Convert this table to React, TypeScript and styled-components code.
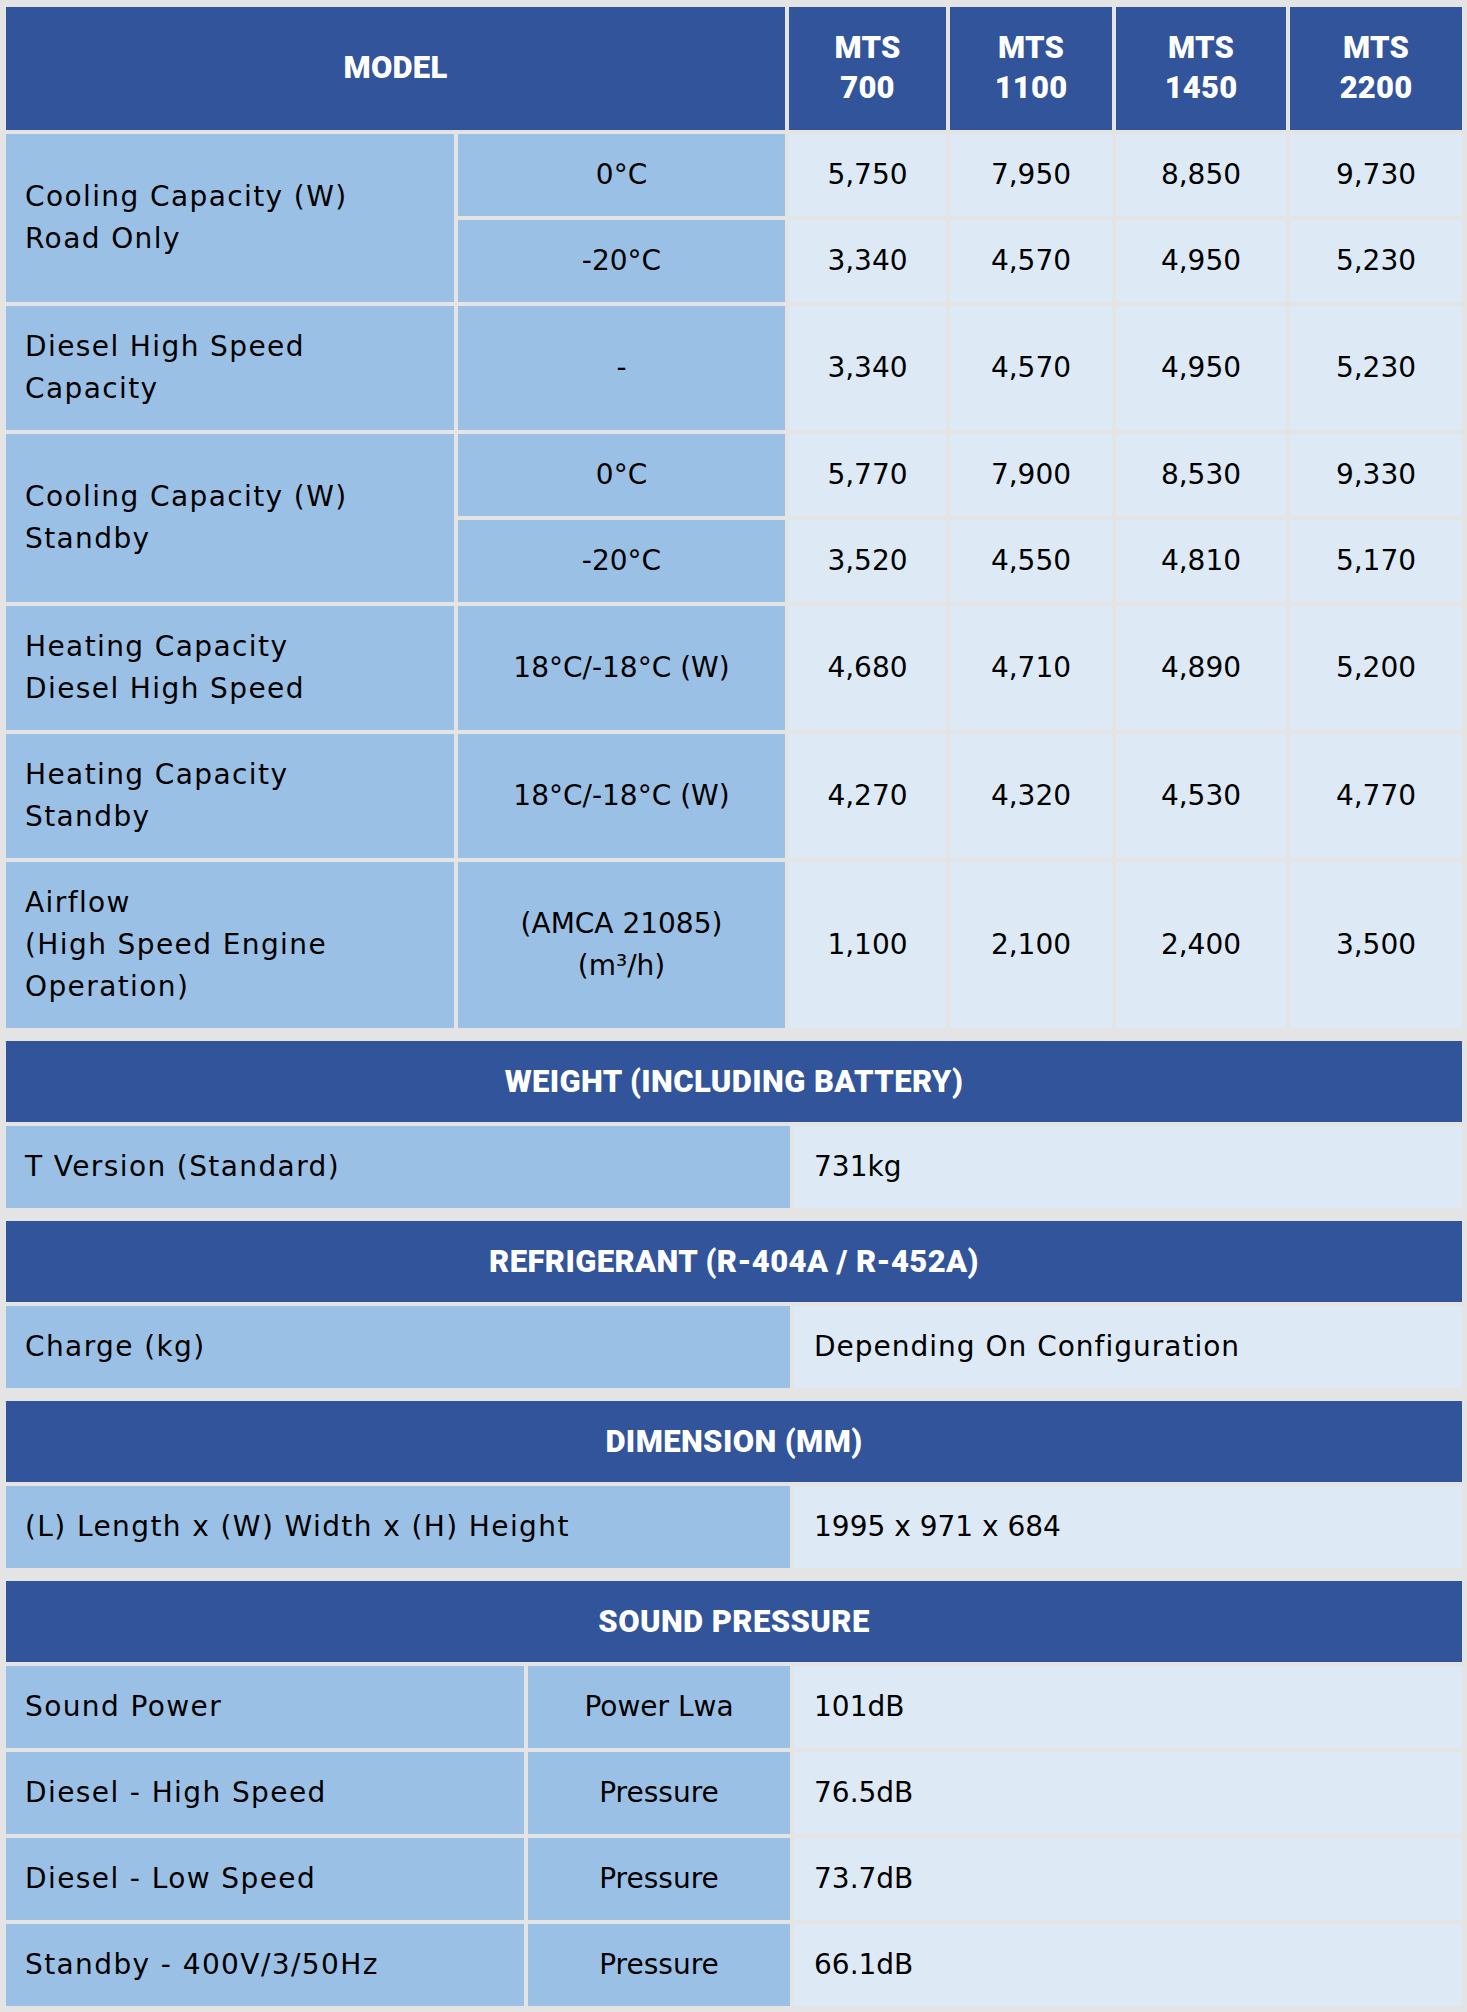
import React from "react";
import styled, { createGlobalStyle } from "styled-components";

const GlobalStyle = createGlobalStyle`
  html, body { margin: 0; padding: 0; background: #e4e4e4; }
  * { box-sizing: border-box; }
`;

const DARK = "#31549a";
const LABEL = "#9bc0e5";
const VALUE = "#ddeaf6";
const BODY_FONT = `"DejaVu Sans", "Liberation Sans", sans-serif`;
const HEAD_FONT = `Roboto, "Liberation Sans", sans-serif`;

const Page = styled.div`
  display: flex;
  flex-direction: column;
  gap: 13px;
  padding: 7px 5px 6px 6px;
  background: #e4e4e4;
`;

const SpecGrid = styled.div<{ $cols: string }>`
  display: grid;
  grid-template-columns: ${(p) => p.$cols};
  gap: 4px;
`;

const HeadCell = styled.div<{ $span?: number }>`
  grid-column: span ${(p) => p.$span ?? 1};
  background: ${DARK};
  color: #fff;
  font-family: ${HEAD_FONT};
  font-weight: 900;
  font-size: 31px;
  line-height: 40px;
  letter-spacing: 0.2px;
  text-transform: uppercase;
  display: flex;
  align-items: center;
  justify-content: center;
  text-align: center;
  padding: 21px 10px 22px;
`;

const SectionHead = styled.div`
  grid-column: 1 / -1;
  background: ${DARK};
  color: #fff;
  font-family: ${HEAD_FONT};
  font-weight: 900;
  font-size: 31px;
  line-height: 41px;
  letter-spacing: 0.4px;
  text-transform: uppercase;
  text-align: center;
  padding: 20px 10px;
`;

const Cell = styled.div<{ $rows?: number; $center?: boolean }>`
  grid-row: span ${(p) => p.$rows ?? 1};
  display: flex;
  align-items: center;
  justify-content: ${(p) => (p.$center ? "center" : "flex-start")};
  text-align: ${(p) => (p.$center ? "center" : "left")};
  padding: 20px;
  font-family: ${BODY_FONT};
  font-size: 28px;
  line-height: 42px;
  color: #000;
`;

const LabelCell = styled(Cell)`
  background: ${LABEL};
  letter-spacing: 1.4px;
  padding-left: 19px;
`;

const SubCell = styled(Cell)`
  background: ${LABEL};
`;

const ValueCell = styled(Cell)<{ $wide?: boolean }>`
  background: ${VALUE};
  letter-spacing: ${(p) => (p.$wide ? "1px" : "0")};
`;

type Row = {
  label: string[];
  subs: { sub: string[]; values: string[] }[];
};

const performance: Row[] = [
  {
    label: ["Cooling Capacity (W)", "Road Only"],
    subs: [
      { sub: ["0°C"], values: ["5,750", "7,950", "8,850", "9,730"] },
      { sub: ["-20°C"], values: ["3,340", "4,570", "4,950", "5,230"] },
    ],
  },
  {
    label: ["Diesel High Speed", "Capacity"],
    subs: [{ sub: ["-"], values: ["3,340", "4,570", "4,950", "5,230"] }],
  },
  {
    label: ["Cooling Capacity (W)", "Standby"],
    subs: [
      { sub: ["0°C"], values: ["5,770", "7,900", "8,530", "9,330"] },
      { sub: ["-20°C"], values: ["3,520", "4,550", "4,810", "5,170"] },
    ],
  },
  {
    label: ["Heating Capacity", "Diesel High Speed"],
    subs: [{ sub: ["18°C/-18°C (W)"], values: ["4,680", "4,710", "4,890", "5,200"] }],
  },
  {
    label: ["Heating Capacity", "Standby"],
    subs: [{ sub: ["18°C/-18°C (W)"], values: ["4,270", "4,320", "4,530", "4,770"] }],
  },
  {
    label: ["Airflow", "(High Speed Engine", "Operation)"],
    subs: [{ sub: ["(AMCA 21085)", "(m³/h)"], values: ["1,100", "2,100", "2,400", "3,500"] }],
  },
];

const models = ["700", "1100", "1450", "2200"];

const Lines = ({ lines }: { lines: string[] }) => (
  <span>
    {lines.map((l, i) => (
      <React.Fragment key={i}>
        {i > 0 && <br />}
        {l}
      </React.Fragment>
    ))}
  </span>
);

const simpleSections = [
  { title: "Weight (Including Battery)", label: "T Version (Standard)", value: "731kg", wide: false },
  { title: "Refrigerant (R-404A / R-452A)", label: "Charge (kg)", value: "Depending On Configuration", wide: true },
  { title: "Dimension (mm)", label: "(L) Length x (W) Width x (H) Height", value: "1995 x 971 x 684", wide: false },
];

const sound = [
  { label: "Sound Power", sub: "Power Lwa", value: "101dB" },
  { label: "Diesel - High Speed", sub: "Pressure", value: "76.5dB" },
  { label: "Diesel - Low Speed", sub: "Pressure", value: "73.7dB" },
  { label: "Standby - 400V/3/50Hz", sub: "Pressure", value: "66.1dB" },
];

export default function App() {
  return (
    <>
      <GlobalStyle />
      <Page>
        <SpecGrid $cols="448px 327px 157px 162px 170px 172px">
          <HeadCell $span={2}>Model</HeadCell>
          {models.map((m) => (
            <HeadCell key={m}>
              <span>
                MTS
                <br />
                {m}
              </span>
            </HeadCell>
          ))}
          {performance.map((row, ri) => (
            <React.Fragment key={ri}>
              <LabelCell $rows={row.subs.length}>
                <Lines lines={row.label} />
              </LabelCell>
              {row.subs.map((s, si) => (
                <React.Fragment key={si}>
                  <SubCell $center>
                    <Lines lines={s.sub} />
                  </SubCell>
                  {s.values.map((v, vi) => (
                    <ValueCell $center key={vi}>
                      {v}
                    </ValueCell>
                  ))}
                </React.Fragment>
              ))}
            </React.Fragment>
          ))}
        </SpecGrid>

        {simpleSections.map((s) => (
          <SpecGrid $cols="784px 668px" key={s.title}>
            <SectionHead>{s.title}</SectionHead>
            <LabelCell>{s.label}</LabelCell>
            <ValueCell $wide={s.wide}>{s.value}</ValueCell>
          </SpecGrid>
        ))}

        <SpecGrid $cols="518px 262px 668px">
          <SectionHead>Sound Pressure</SectionHead>
          {sound.map((r) => (
            <React.Fragment key={r.label}>
              <LabelCell>{r.label}</LabelCell>
              <SubCell $center>{r.sub}</SubCell>
              <ValueCell>{r.value}</ValueCell>
            </React.Fragment>
          ))}
        </SpecGrid>
      </Page>
    </>
  );
}
